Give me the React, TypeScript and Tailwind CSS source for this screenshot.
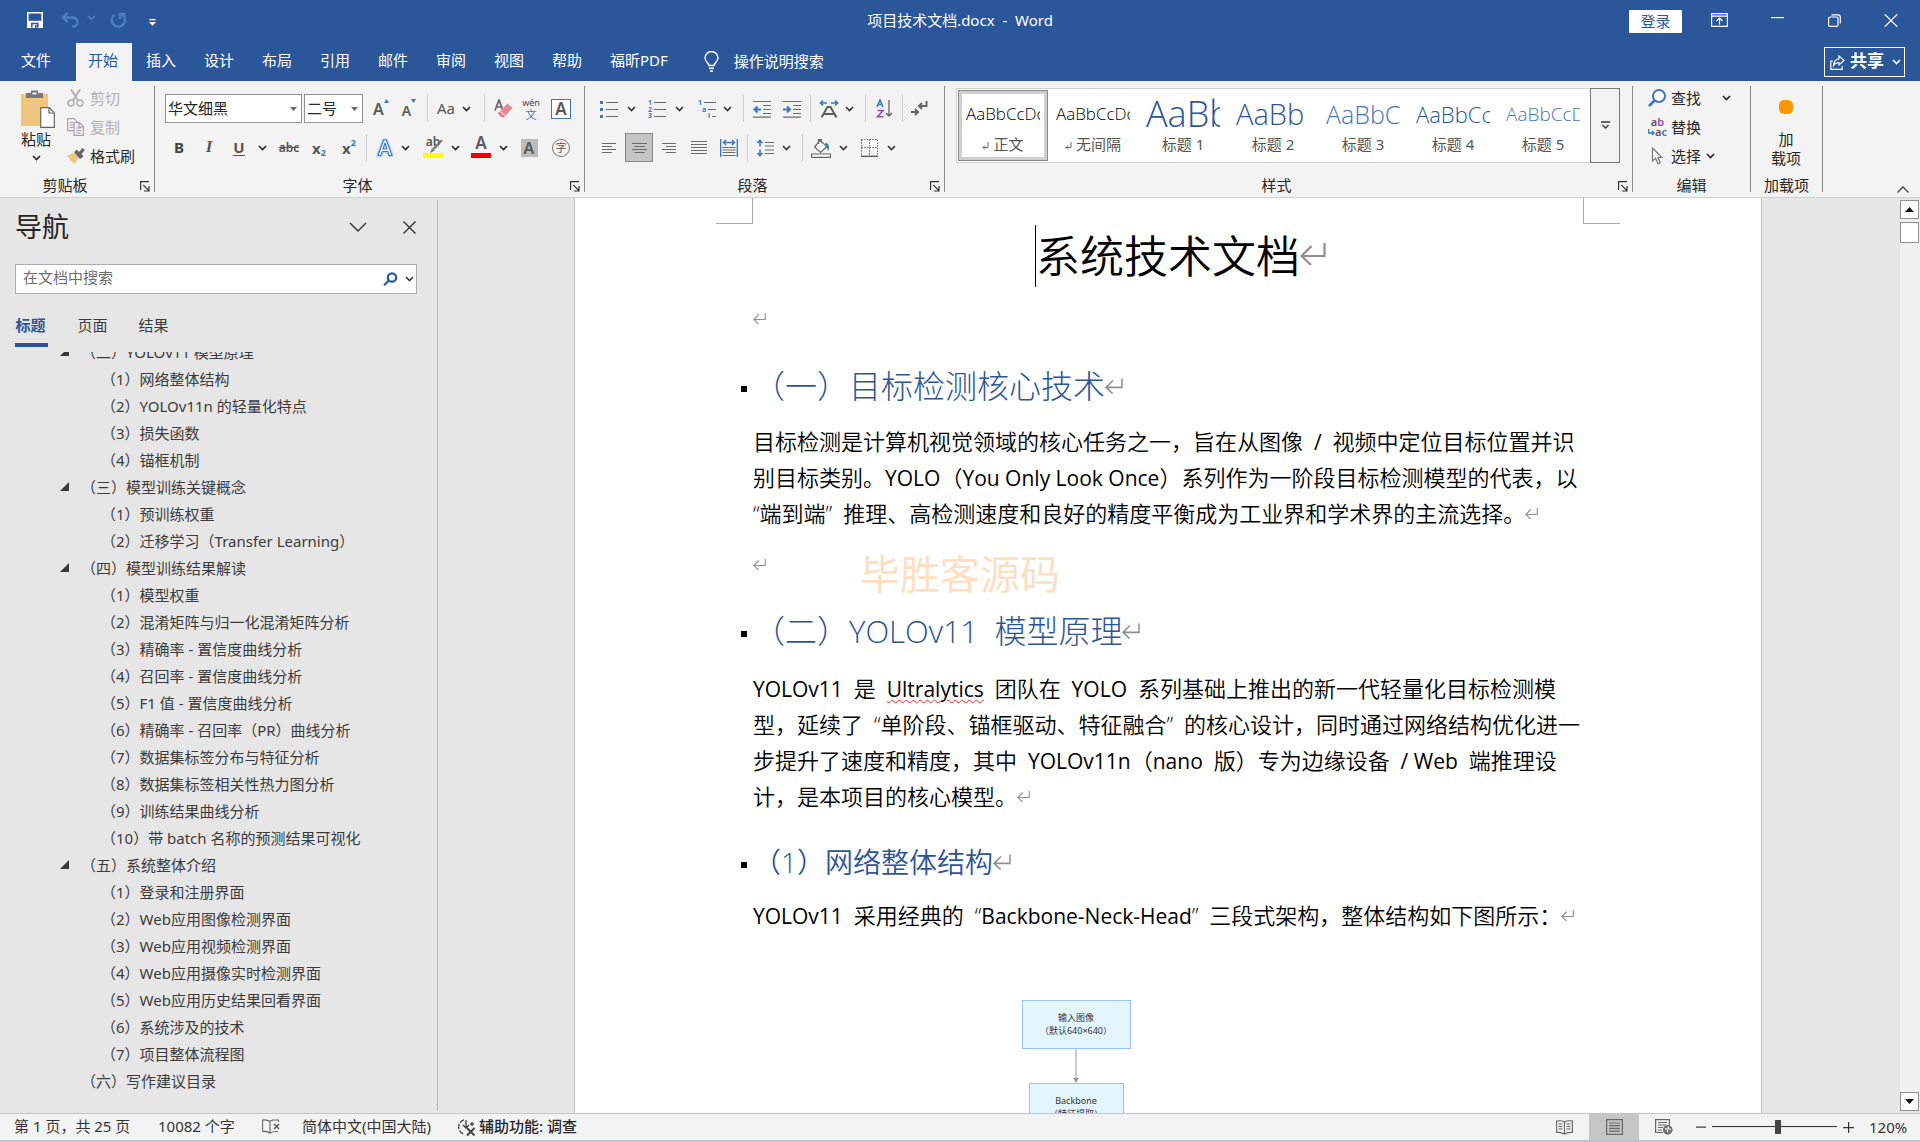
import React from "react";

type Kids = { children?: React.ReactNode };

/* ---------- small shared pieces ---------- */

function Chevron({ className = "" }: { className?: string }) {
  return (
    <svg width="9" height="6" viewBox="0 0 9 6" className={className} fill="none" stroke="currentColor" strokeWidth="1.6" aria-hidden="true">
      <path d="M1 1l3.5 3.5L8 1" />
    </svg>
  );
}

function Tool({ label, className = "w-7", children }: Kids & { label: string; className?: string }) {
  return (
    <button type="button" aria-label={label} className={`flex h-[29px] shrink-0 items-center justify-center ${className}`}>
      {children}
    </button>
  );
}

function Drop({ label, className = "w-4" }: { label: string; className?: string }) {
  return (
    <Tool label={label} className={className}>
      <Chevron />
    </Tool>
  );
}

function Sep({ className = "" }: { className?: string }) {
  return <div className={`h-[27px] w-px shrink-0 bg-[#d0d0d0] ${className}`} />;
}

function Launcher({ label }: { label: string }) {
  return (
    <button type="button" aria-label={label} className="absolute right-1 bottom-0">
      <svg width="10" height="11" viewBox="0 0 10 11" fill="none" stroke="#333" strokeWidth="1.2">
        <path d="M.6 9V.6H9M3.2 3.8l5.4 5.6M9 5v5H4" />
      </svg>
    </button>
  );
}

function Group({ label, launcher, className, children }: Kids & { label: string; launcher?: boolean; className: string }) {
  return (
    <section className={`relative mt-[5px] flex h-[106px] shrink-0 flex-col border-r border-[#8a8a8a] ${className}`}>
      <div className="h-[92px] shrink-0">{children}</div>
      <div className={`flex h-3.5 items-center justify-center leading-none whitespace-nowrap ${launcher ? "pr-6" : ""}`}>{label}</div>
      {launcher && <Launcher label={`${label}设置`} />}
    </section>
  );
}

function ReturnMark({ className = "" }: { className?: string }) {
  return (
    <svg viewBox="0 0 26 22" className={`inline-block shrink-0 ${className}`} fill="none" stroke="#8f8f8f" strokeWidth="2.2" aria-hidden="true">
      <path d="M24.5 0v13H2M11.5 3L1.5 13l9.5 9" />
    </svg>
  );
}

/* ---------- title bar ---------- */

function TitleBar() {
  return (
    <header className="grid h-[43px] grid-cols-[1fr_auto_1fr] items-start text-white">
      <div className="flex h-10 items-center pl-[27px]">
        <button type="button" aria-label="保存">
          <svg width="16" height="16" viewBox="0 0 16 16" fill="none" stroke="#fff" strokeWidth="1.6">
            <path d="M.8.8h14.4v14.4H.8z" />
            <path d="M1 8.8h14v6.4H1z" fill="#fff" stroke="none" />
            <path d="M4.8 15.5v-4h6v4" stroke="#2b579a" />
            <path d="M8 13h1.6v3H8z" fill="#2b579a" stroke="none" />
          </svg>
        </button>
        <button type="button" aria-label="撤消" className="ml-[18px] flex items-center gap-2 text-[#4f7dbd]">
          <svg width="18" height="16" viewBox="0 0 18 16" fill="none" stroke="currentColor" strokeWidth="2.4">
            <path d="M6.5 1L2 5.5l4.500 4.500M2.500 5.500h8.500c3.500 0 5.500 2 5.500 4.700 0 2.500-2 4.300-4.500 4.300h-1" />
          </svg>
          <Chevron className="-mt-1" />
        </button>
        <button type="button" aria-label="恢复" className="ml-[14px] text-[#4f7dbd]">
          <svg width="17" height="17" viewBox="0 0 17 17" fill="none" stroke="currentColor" strokeWidth="2.4">
            <path d="M4.500 2.800A6.600 6.600 0 1 0 12 2.600M10 7V2h5.500" />
          </svg>
        </button>
        <button type="button" aria-label="自定义快速访问工具栏" className="ml-[22px] mt-1">
          <svg width="7" height="7" viewBox="0 0 7 7" fill="#fff">
            <path d="M.5 0h6v1.300h-6zM0 3h7L3.500 6.800z" />
          </svg>
        </button>
      </div>
      <h1 className="flex h-10 items-center whitespace-pre">项目技术文档.docx  -  Word</h1>
      <div className="flex h-10 items-center justify-end pr-[22px]">
        <button type="button" className="mt-[3px] flex h-[23px] w-[53px] items-center justify-center rounded-[1px] bg-white pb-0.5 text-[#2b579a]">登录</button>
        <button type="button" aria-label="功能区显示选项" className="ml-[29px]">
          <svg width="17" height="14" viewBox="0 0 17 14" fill="none" stroke="#fff" strokeWidth="1.200">
            <path d="M.6.6h15.800v12.800H.6zM.6 3.200h15.800M8.500 11.500V5.500M5.500 8l3-3 3 3" />
          </svg>
        </button>
        <button type="button" aria-label="最小化" className="ml-[43px] -mt-1">
          <svg width="13" height="2" viewBox="0 0 13 2"><path d="M0 0h13v1.200H0z" fill="#fff" /></svg>
        </button>
        <button type="button" aria-label="向下还原" className="ml-[44px]">
          <svg width="13" height="13" viewBox="0 0 13 13" fill="none" stroke="#fff" strokeWidth="1.200">
            <rect x=".6" y="3" width="9.400" height="9.400" rx="1.500" />
            <path d="M3.500.8h6.300c1.500 0 2.500 1 2.500 2.500v6.300" />
          </svg>
        </button>
        <button type="button" aria-label="关闭" className="ml-[43px]">
          <svg width="14" height="13" viewBox="0 0 14 13" fill="none" stroke="#fff" strokeWidth="1.200">
            <path d="M.7.3l12.600 12.400M13.300.3L.7 12.700" />
          </svg>
        </button>
      </div>
    </header>
  );
}

const TABS = ["插入", "设计", "布局", "引用", "邮件", "审阅", "视图", "帮助"];

function RibbonTabs() {
  return (
    <nav className="flex h-[38px] items-center text-white">
      <button type="button" className="h-full w-[76px] pr-1 pb-1">文件</button>
      <button type="button" className="h-full w-14 bg-[#f3f3f3] pr-0.5 pb-1 text-[#2b579a]">开始</button>
      {TABS.map((t) => (
        <button key={t} type="button" className="h-full w-[58px] shrink-0 pb-1">{t}</button>
      ))}
      <button type="button" className="h-full shrink-0 pr-4 pb-1 pl-3.5">福昕PDF</button>
      <button type="button" className="ml-5 flex h-full shrink-0 items-center gap-[15px] pb-0.5">
        <svg width="15" height="21" viewBox="0 0 15 21" fill="none" stroke="#fff" strokeWidth="1.400">
          <path d="M5 14.500c0-2-4-4-4-7.500a6.400 6.400 0 0 1 13 0c0 3.500-4 5.500-4 7.500zM5 17.300h5M6 20h3" />
        </svg>
        操作说明搜索
      </button>
      <button type="button" className="mr-[15px] ml-auto flex h-[30px] w-[81px] items-center border border-white pl-[5px]">
        <svg width="15" height="15" viewBox="0 0 15 15" fill="none" stroke="#fff" strokeWidth="1.200">
          <path d="M3 6H.8v8.300h11.400V11M9 1l5 4.500L9 10V7.500c-2.500 0-4 .8-5.500 3C3.800 6.500 6 4.200 9 3.800z" />
        </svg>
        <span className="mb-0.5 ml-[5px] text-[17px] font-bold">共享</span>
        <Chevron className="ml-2" />
      </button>
    </nav>
  );
}

/* ---------- ribbon ---------- */

function ClipboardGroup() {
  return (
    <Group label="剪贴板" launcher className="w-[155px]">
      <div className="flex pl-[17px]">
        <button type="button" className="flex w-[38px] flex-col items-center pt-[3px]">
          <svg width="36" height="40" viewBox="0 0 36 40" fill="none" className="ml-1">
            <path d="M1 5h27v32H1z" fill="#eec77d" />
            <path d="M6 9V4h5V1.500h7V4h5v5z" fill="#777" />
            <path d="M12.500 3.500h4v2h-4z" fill="#f3f3f3" />
            <path d="M20.700 18.700h8.600l5 5v14.600H20.700z" fill="#fff" stroke="#666" strokeWidth="1.200" />
            <path d="M29 19v5h5" stroke="#666" strokeWidth="1.200" />
          </svg>
          <span className="mt-0.5 leading-4">粘贴</span>
          <Chevron className="mt-2" />
        </button>
        <div className="ml-3 flex flex-col whitespace-nowrap">
          <button type="button" className="flex h-6 items-center gap-[6px] text-[#b1b1b1]">
            <svg width="17" height="18" viewBox="0 0 17 18" fill="none" stroke="currentColor" strokeWidth="1.500">
              <path d="M4 .5l7.500 11.500M13 .5L5.500 12" strokeWidth="2" />
              <circle cx="4" cy="14" r="3" /><circle cx="13" cy="14" r="3" />
            </svg>
            剪切
          </button>
          <button type="button" className="mt-[5px] flex h-6 items-center gap-[6px] text-[#b1b1b1]">
            <svg width="17" height="18" viewBox="0 0 17 18" fill="#f3f3f3" stroke="#aaa2ae" strokeWidth="1.200">
              <path d="M.6.6h6.400l3 3v9H.6zM2.500 4.500h4M2.500 7h4M2.500 9.500h4" />
              <path d="M7 4.600h5.500l3.900 3.900v8.900H7zM9 10h5M9 12.500h5M9 15h5M12 5v4h4" />
            </svg>
            复制
          </button>
          <button type="button" className="mt-[5px] flex h-6 items-center gap-[5px]">
            <svg width="18" height="16" viewBox="0 0 18 16">
              <path d="M0 7.500l8-3 4 5-5 6.500z" fill="#eec77d" />
              <path d="M7 4l3-2.500L12 4l3.500-4L18 2l-3.500 4 2 2.500L13 11z" fill="#666" />
            </svg>
            格式刷
          </button>
        </div>
      </div>
    </Group>
  );
}

function Combo({ label, value, className }: { label: string; value: string; className: string }) {
  return (
    <div className={`relative h-[29px] shrink-0 border border-[#919191] bg-white ${className}`}>
      <select aria-label={label} defaultValue={value} className="h-full w-full appearance-none pb-0.5 pl-0.5 outline-none">
        <option>{value}</option>
      </select>
      <svg width="7" height="4" viewBox="0 0 7 4" className="pointer-events-none absolute top-3 right-1" fill="#666"><path d="M0 0h7L3.500 4z" /></svg>
    </div>
  );
}

const letterA = "font-['Noto_Sans'] font-semibold leading-none text-[#5a5a5a]";

function FontGroup() {
  return (
    <Group label="字体" launcher className="w-[430px]">
      <div className="flex items-center pt-2 pl-2.5">
        <Combo label="字体" value="华文细黑" className="w-[137px]" />
        <Combo label="字号" value="二号" className="ml-0.5 w-[59px]" />
        <Tool label="增大字号" className="ml-1 w-7">
          <span className={`text-[16px] ${letterA}`}>A</span>
          <svg width="5" height="4" viewBox="0 0 5 4" className="mb-4" fill="#3f78ba"><path d="M0 4h5L2.500 0z" /></svg>
        </Tool>
        <Tool label="减小字号">
          <span className={`mt-1 text-[14px] ${letterA}`}>A</span>
          <svg width="5" height="4" viewBox="0 0 5 4" className="mb-4" fill="#3f78ba"><path d="M0 0h5L2.500 4z" /></svg>
        </Tool>
        <Sep className="ml-1" />
        <Tool label="更改大小写" className="ml-1 w-7"><span className="mb-0.5 text-[15px] text-[#555]">Aa</span></Tool>
        <Drop label="更改大小写选项" className="w-3" />
        <Sep className="ml-3" />
        <Tool label="清除所有格式" className="ml-1 w-7">
          <svg width="19" height="19" viewBox="0 0 19 19" fill="none">
            <path d="M1 11.500L5 1l4 10.500M2.500 8h5" stroke="#666" strokeWidth="1.700" />
            <path d="M13.500 4.500L18.500 9 10 18.500 7 18l-3.500-3.500z" fill="#e8879c" />
            <path d="M6 12l5 4.500" stroke="#f3f3f3" />
          </svg>
        </Tool>
        <Tool label="拼音指南">
          <span className="flex flex-col items-center">
            <span className="text-[9px] leading-[12px] text-[#444]">wén</span>
            <span className="text-[11px] leading-[12px] text-[#3f78ba]">文</span>
          </span>
        </Tool>
        <Tool label="字符边框" className="ml-0.5 w-7">
          <span className={`flex size-5 items-center justify-center border border-[#3f78ba] bg-white text-[17px] ${letterA}`}>A</span>
        </Tool>
      </div>
      <div className="flex items-center pt-2.5 pl-[9px]">
        <Tool label="加粗" className="w-[30px]"><span className="mb-0.5 text-[15px] font-bold text-[#444]">B</span></Tool>
        <Tool label="倾斜" className="w-[30px]"><span className="mb-0.5 font-['Liberation_Serif'] text-[17px] font-bold italic text-[#555]">I</span></Tool>
        <Tool label="下划线" className="w-[30px]"><span className="border-b border-[#555] text-[15px] leading-[16px] font-bold text-[#555]">U</span></Tool>
        <Drop label="下划线样式" />
        <Tool label="删除线" className="ml-1 w-[30px]"><span className="text-[12px] font-semibold text-[#555] line-through">abc</span></Tool>
        <Tool label="下标" className="w-[30px]">
          <span className="text-[15px] font-bold text-[#555]">x</span><span className="mt-2.5 text-[9px] font-bold text-[#3f78ba]">2</span>
        </Tool>
        <Tool label="上标" className="w-[30px]">
          <span className="text-[15px] font-bold text-[#555]">x</span><span className="mb-2.5 text-[9px] font-bold text-[#3f78ba]">2</span>
        </Tool>
        <Sep className="ml-0.5" />
        <Tool label="文本效果" className="ml-1 w-7">
          <svg width="18" height="20" viewBox="0 0 18 20" fill="none" strokeLinejoin="round">
            <path d="M2 17.500L7.700 2h2.600L16 17.500h-2.800L11.800 13.500H6.200L4.800 17.500zM7 11h4L9 5z" stroke="#b8d3f0" strokeWidth="3.500" />
            <path d="M2 17.500L7.700 2h2.600L16 17.500h-2.800L11.800 13.500H6.200L4.800 17.500zM7 11h4L9 5z" fill="#fff" stroke="#3f78ba" strokeWidth="1.100" />
          </svg>
        </Tool>
        <Drop label="文本效果选项" className="w-3" />
        <Tool label="突出显示颜色" className="ml-2 w-7">
          <span className="relative flex h-5 w-5 flex-col">
            <span className="-mt-1 text-[12px] leading-[16px] font-semibold text-[#555]">ab</span>
            <svg width="20" height="14" viewBox="0 0 20 14" className="absolute top-0.5 left-0" fill="none"><path d="M19 0l-8.500 9" stroke="#777" strokeWidth="2.400" /><path d="M9 8l3 2.500-5 2.500z" fill="#777" /></svg>
            <span className="absolute inset-x-0 bottom-0 h-[5px] bg-[#ffff00]" />
          </span>
        </Tool>
        <Drop label="突出显示选项" />
        <Tool label="字体颜色" className="ml-1 w-7">
          <span className="flex h-5 w-5 flex-col items-center justify-between">
            <span className={`-mt-1 text-[17px] ${letterA}`}>A</span>
            <span className="h-[5px] w-full shrink-0 bg-[#f00000]" />
          </span>
        </Tool>
        <Drop label="字体颜色选项" />
        <Tool label="字符底纹" className="ml-1 w-7">
          <span className={`flex h-[18px] w-[17px] items-center justify-center bg-[#bcbcbc] text-[16px] ${letterA}`}>A</span>
        </Tool>
        <Tool label="带圈字符" className="ml-1 w-7">
          <span className="flex size-[18px] items-center justify-center rounded-full border border-[#777] text-[11px] leading-none text-[#555]">字</span>
        </Tool>
      </div>
    </Group>
  );
}

function Lines({ d, width = 18, extra }: { d: string; width?: number; extra?: React.ReactNode }) {
  return (
    <svg width={width} height="18" viewBox={`0 0 ${width} 18`} fill="none" stroke="#6a6a6a" strokeWidth="1.200">
      <path d={d} />
      {extra}
    </svg>
  );
}

const blueNum = "fill-[#3f78ba] stroke-none font-['Noto_Sans'] font-bold text-[7px]";

function ParagraphGroup() {
  return (
    <Group label="段落" launcher className="w-[360px]">
      <div className="flex items-center pt-2 pl-2.5 text-[#333]">
        <Tool label="项目符号">
          <Lines d="M6 2.500h12M6 9.500h12M6 16.500h12" extra={<path d="M0 1h3v3H0zM0 8h3v3H0zM0 15h3v3H0z" fill="#3f78ba" stroke="none" />} />
        </Tool>
        <Drop label="项目符号选项" />
        <Tool label="编号" className="ml-1 w-7">
          <Lines d="M6 2.500h12M6 9.500h12M6 16.500h12" extra={<><text x="0" y="5" className={blueNum}>1</text><text x="0" y="12" className={blueNum}>2</text><text x="0" y="18" className={blueNum}>3</text></>} />
        </Tool>
        <Drop label="编号选项" />
        <Tool label="多级列表" className="ml-1.5 w-7">
          <Lines d="M6 2.500h12M10 9.500h8M14 16.500h4" extra={<><text x="0" y="5" className={blueNum}>1</text><text x="4" y="12" className={blueNum}>a</text><text x="10" y="18" className={blueNum}>i</text></>} />
        </Tool>
        <Drop label="多级列表选项" className="w-3" />
        <Sep className="ml-2.5" />
        <Tool label="减少缩进量" className="ml-1 w-7">
          <Lines d="M0 1.500h18M10 5.500h8M10 9.500h8M10 13.500h8M0 17.200h18" extra={<path d="M8 9.500H2M4.500 6.500l-3 3 3 3" stroke="#3f78ba" strokeWidth="2" />} />
        </Tool>
        <Tool label="增加缩进量" className="ml-0.5 w-7">
          <Lines d="M0 1.500h18M10 5.500h8M10 9.500h8M10 13.500h8M0 17.200h18" extra={<path d="M0 9.500h6M4 6.500l3 3-3 3" stroke="#3f78ba" strokeWidth="2" />} />
        </Tool>
        <Sep className="ml-1" />
        <Tool label="中文版式" className="ml-1 w-7">
          <svg width="20" height="18" viewBox="0 0 20 18" fill="none">
            <path d="M2.500 17.500L8.500 7h3l6 10.500M5 14h10" stroke="#5a5a5a" strokeWidth="1.900" />
            <path d="M8 3H1.500M4 .5L1.500 3 4 5.500M12 3h6.500M16 .5L18.500 3 16 5.500" stroke="#3f78ba" strokeWidth="1.700" />
          </svg>
        </Tool>
        <Drop label="中文版式选项" className="w-3" />
        <Sep className="ml-2.5" />
        <Tool label="排序" className="ml-1 w-7">
          <svg width="17" height="19" viewBox="0 0 17 19" fill="none" strokeWidth="1.600">
            <path d="M1 8L4 1l3 7M2 5.500h4" stroke="#3f78ba" />
            <path d="M1.500 11.500h5.500L1.500 17.800h6" stroke="#8f4fa8" />
            <path d="M13 1v16M10 14l3 3 3-3" stroke="#666" strokeWidth="1.300" />
          </svg>
        </Tool>
        <Sep className="ml-1" />
        <Tool label="显示编辑标记" className="ml-0.5 w-7">
          <svg width="17" height="15" viewBox="0 0 17 15" fill="none" stroke="#666" strokeWidth="2">
            <path d="M15.500 0v5H9M11 2L8 5l3 3M0 11h6M4 8l3 3-3 3" />
          </svg>
        </Tool>
      </div>
      <div className="flex items-center pt-2.5 pl-2.5 text-[#333]">
        <Tool label="左对齐"><Lines width={14} d="M0 4.500h14M0 7.500h10M0 10.500h14M0 13.500h10" /></Tool>
        <Tool label="居中" className="ml-0.5 w-7 border border-[#888] bg-[#c5c5c5]"><Lines width={15} d="M0 4.500h15M2.500 7.500h10M0 10.500h15M2.500 13.500h10" /></Tool>
        <Tool label="右对齐" className="ml-0.5 w-7"><Lines width={14} d="M0 4.500h14M4 7.500h10M0 10.500h14M4 13.500h10" /></Tool>
        <Tool label="两端对齐" className="ml-0.5 w-7"><Lines width={16} d="M0 2.500h16M0 5.500h16M0 8.500h16M0 11.500h16M0 14.500h16" /></Tool>
        <Tool label="分散对齐" className="ml-0.5 w-7">
          <Lines d="M2.500 8.500h13M2.500 11h13M2.500 13.500h13M2.500 16.500h13" extra={<path d="M.6 0v18M17.400 0v18M4 3.500h10M6 1L3.500 3.500 6 6M12 1l2.500 2.500L12 6" stroke="#3f78ba" strokeWidth="1.500" />} />
        </Tool>
        <Sep className="ml-1" />
        <Tool label="行和段落间距" className="ml-1 w-7">
          <Lines d="M8 3.500h9M8 7h9M8 11h9M8 14.500h9" extra={<path d="M3 1.500v6M.5 4L3 1.500 5.500 4M3 10.500v6M.5 14L3 16.500 5.500 14" stroke="#3f78ba" strokeWidth="1.600" />} />
        </Tool>
        <Drop label="间距选项" className="w-3" />
        <Sep className="ml-2.5" />
        <Tool label="底纹" className="ml-1 w-7">
          <svg width="20" height="20" viewBox="0 0 20 20" fill="none" stroke="#666" strokeWidth="1.200">
            <path d="M9 2.500L3.500 9l6 5.500L16 8.500zM7.500 6V1.500h3V5" fill="#fff" />
            <path d="M14.500 4.500c3 1 4.300 3.500 3 8.500-1-2-1.500-3-3-4z" fill="#3f78ba" stroke="none" />
            <path d="M.6 16h18.800v3.400H.6z" fill="#fff" />
          </svg>
        </Tool>
        <Drop label="底纹选项" />
        <Tool label="边框" className="ml-1 w-7">
          <svg width="17" height="18" viewBox="0 0 17 18" fill="#fff" stroke="#666" strokeDasharray="1.500 1.200">
            <path d="M.5.5h16v16.500M.5.500V17M8.500.5V17M.5 8.500h16" />
            <path d="M0 17.300h17" strokeDasharray="none" stroke="#555" strokeWidth="1.300" />
          </svg>
        </Tool>
        <Drop label="边框选项" />
      </div>
    </Group>
  );
}

const STYLES = [
  { name: "无间隔", text: "AaBbCcDc", sample: "text-[17px] text-black", mark: true },
  { name: "标题 1", text: "AaBb", sample: "text-[36px] text-[#2f5496]" },
  { name: "标题 2", text: "AaBb", sample: "text-[29px] text-[#2f5496]" },
  { name: "标题 3", text: "AaBbC", sample: "text-[25px] text-[#4a74b5]" },
  { name: "标题 4", text: "AaBbCc", sample: "text-[22px] text-[#2f5496]" },
  { name: "标题 5", text: "AaBbCcD", sample: "text-[19px] text-[#4a74b5]" },
];

function StyleMark() {
  return (
    <svg width="7" height="8" viewBox="0 0 7 8" className="mt-1" fill="none" stroke="#666" strokeWidth="1">
      <path d="M6 0v5.500H1M3 3.500l-2 2 2 2" />
    </svg>
  );
}

function StyleCell({ name, text, sample, mark }: { name: string; text: string; sample: string; mark?: boolean }) {
  return (
    <>
      <span className={`flex h-10 w-[74px] items-center overflow-hidden font-['Open_Sans','Noto_Sans_CJK_SC'] leading-10 font-[350] whitespace-nowrap ${sample}`}>{text}</span>
      <span className="flex h-5 items-center justify-center gap-1 text-[15px] leading-none text-[#555]">
        {mark && <StyleMark />}
        {name}
      </span>
    </>
  );
}

function StylesGroup() {
  return (
    <Group label="样式" launcher className="w-[688px]">
      <div className="flex pt-0.5 pl-[11px]">
        <div className="flex h-[75px] w-[664px] border border-[#d0d0d0] bg-white">
          <button type="button" className="m-px flex h-[71px] w-[90px] shrink-0 flex-col items-center border border-[#8a8a8a] bg-[#cfcfcb] p-[3px]">
            <span className="flex h-full w-full flex-col items-center bg-white">
              <StyleCell name="正文" text="AaBbCcDc" sample="text-[17px] text-black" mark />
            </span>
          </button>
          {STYLES.map((s) => (
            <button key={s.name} type="button" className="flex w-[90px] shrink-0 flex-col items-center pt-[5px] pr-0.5">
              <StyleCell {...s} />
            </button>
          ))}
          <button type="button" aria-label="其他样式" className="-m-px ml-auto flex w-[30px] items-center justify-center border border-[#777] bg-[#f3f3f3]">
            <svg width="9" height="9" viewBox="0 0 9 9" fill="none" stroke="#333" strokeWidth="1.300"><path d="M0 1h9M1.500 4l3 3 3-3" /></svg>
          </button>
        </div>
      </div>
    </Group>
  );
}

function EditGroup() {
  return (
    <Group label="编辑" className="w-[118px]">
      <div className="flex flex-col pl-[15px]">
        <button type="button" className="flex h-6 items-center gap-[5px]">
          <svg width="18" height="18" viewBox="0 0 18 18" fill="none" stroke="#3f78ba" strokeWidth="2"><circle cx="11" cy="7" r="6" fill="#fff" /><path d="M6.500 11.500L1 17" strokeWidth="2.600" /></svg>
          查找
          <Chevron className="ml-4" />
        </button>
        <button type="button" className="mt-[5px] flex h-6 items-center gap-[4px]">
          <span className="flex w-[19px] flex-col text-[11px] leading-[10px] font-semibold text-[#555]">
            <span>a<span className="text-[#8f4fa8]">b</span></span>
            <span className="flex items-center justify-end">
              <svg width="7" height="7" viewBox="0 0 7 7" fill="none" stroke="#3f78ba" strokeWidth="1.300"><path d="M.7 0v4H6M4 2l2 2-2 2" /></svg>
              a<span className="text-[#3f78ba]">c</span>
            </span>
          </span>
          替换
        </button>
        <button type="button" className="mt-[5px] flex h-6 items-center gap-[5px]">
          <svg width="18" height="18" viewBox="0 0 18 18" fill="#fff" stroke="#777" strokeWidth="1.200"><path d="M4.500 1v13l3-2.700 2.500 5.500 2.300-1-2.500-5.300h4z" /></svg>
          选择
          <Chevron />
        </button>
      </div>
    </Group>
  );
}

function Ribbon() {
  return (
    <div className="flex h-[117px] border-b border-[#d0d0d0] bg-[#f3f3f3] text-[#262626]">
      <ClipboardGroup />
      <FontGroup />
      <ParagraphGroup />
      <StylesGroup />
      <EditGroup />
      <Group label="加载项" className="w-[72px]">
        <button type="button" className="flex w-full flex-col items-center pt-3.5 pr-px">
          <span className="size-3.5 rounded-[5px] bg-[#ff9500]" />
          <span className="mt-4 leading-[19px]">加<br />载项</span>
        </button>
      </Group>
      <button type="button" aria-label="折叠功能区" className="mr-[11px] mb-1 ml-auto self-end">
        <svg width="12" height="7" viewBox="0 0 12 7" fill="none" stroke="#444" strokeWidth="1.300"><path d="M.5 6.500l5.500-5.500 5.500 5.500" /></svg>
      </button>
    </div>
  );
}

/* ---------- navigation pane ---------- */

const TREE: { t: string; parent?: boolean; top?: boolean }[] = [
  { t: "（二）YOLOv11 模型原理", top: true, parent: true },
  { t: "（1）网络整体结构" },
  { t: "（2）YOLOv11n 的轻量化特点" },
  { t: "（3）损失函数" },
  { t: "（4）锚框机制" },
  { t: "（三）模型训练关键概念", top: true, parent: true },
  { t: "（1）预训练权重" },
  { t: "（2）迁移学习（Transfer Learning）" },
  { t: "（四）模型训练结果解读", top: true, parent: true },
  { t: "（1）模型权重" },
  { t: "（2）混淆矩阵与归一化混淆矩阵分析" },
  { t: "（3）精确率 - 置信度曲线分析" },
  { t: "（4）召回率 - 置信度曲线分析" },
  { t: "（5）F1 值 - 置信度曲线分析" },
  { t: "（6）精确率 - 召回率（PR）曲线分析" },
  { t: "（7）数据集标签分布与特征分析" },
  { t: "（8）数据集标签相关性热力图分析" },
  { t: "（9）训练结果曲线分析" },
  { t: "（10）带 batch 名称的预测结果可视化" },
  { t: "（五）系统整体介绍", top: true, parent: true },
  { t: "（1）登录和注册界面" },
  { t: "（2）Web应用图像检测界面" },
  { t: "（3）Web应用视频检测界面" },
  { t: "（4）Web应用摄像实时检测界面" },
  { t: "（5）Web应用历史结果回看界面" },
  { t: "（6）系统涉及的技术" },
  { t: "（7）项目整体流程图" },
  { t: "（六）写作建议目录", top: true },
];

function NavPane() {
  return (
    <aside className="mt-0.5 mb-0.5 flex w-[438px] shrink-0 flex-col border-r border-[#b9b9b9] text-[#3b3b3b]">
      <div className="flex h-[54px] items-center pl-[15px]">
        <h2 className="text-[27px] text-[#262626]">导航</h2>
        <button type="button" aria-label="任务窗格选项" className="ml-auto">
          <svg width="18" height="10" viewBox="0 0 18 10" fill="none" stroke="#333" strokeWidth="1.400"><path d="M1 1l8 8 8-8" /></svg>
        </button>
        <button type="button" aria-label="关闭窗格" className="mr-[21px] ml-[36px]">
          <svg width="13" height="13" viewBox="0 0 13 13" fill="none" stroke="#333" strokeWidth="1.400"><path d="M.5.5l12 12M12.500.5l-12 12" /></svg>
        </button>
      </div>
      <div className="mt-2.5 mr-[20px] ml-[15px] flex h-[30px] items-center border border-[#ababab] bg-white pr-0.5">
        <input type="text" aria-label="在文档中搜索" placeholder="在文档中搜索" className="h-full min-w-0 flex-1 bg-transparent pb-1 pl-[7px] outline-none placeholder:text-[#6e6e6e]" />
        <button type="button" aria-label="搜索" className="mr-[7px]">
          <svg width="15" height="14" viewBox="0 0 15 14" fill="none" stroke="#2b579a" strokeWidth="2.200"><circle cx="9" cy="5.500" r="4.200" /><path d="M6 8.500L1 13.300" /></svg>
        </button>
        <button type="button" aria-label="搜索选项"><Chevron /></button>
      </div>
      <div className="mt-4 ml-[15px] flex h-[37px] items-start gap-7">
        <button type="button" className="h-full w-[33px] border-b-4 border-[#2b579a] pr-0.5 pb-1 font-bold whitespace-nowrap text-[#2b579a]">标题</button>
        <button type="button" className="h-[33px] w-[33px] pb-1">页面</button>
        <button type="button" className="h-[33px] w-[33px] pb-1">结果</button>
      </div>
      <div className="mt-[5px] flex-1 overflow-hidden">
        <ul className="-mt-3.5">
          {TREE.map((n) => (
            <li key={n.t} className="flex h-[27px] items-center whitespace-pre">
              <span className={n.top ? "flex w-[81px] shrink-0 justify-end pr-3" : "w-[101px] shrink-0"}>
                {n.parent && (
                  <svg width="9" height="9" viewBox="0 0 9 9" fill="#3b3b3b"><path d="M9 0v9H0z" /></svg>
                )}
              </span>
              <a href="#doc">{n.t}</a>
            </li>
          ))}
        </ul>
      </div>
    </aside>
  );
}

/* ---------- document ---------- */

const LATIN = /([A-Za-z0-9/ -]*[A-Za-z0-9/ ][A-Za-z0-9/ -]*)/;

/* Latin runs are set one pixel smaller than the surrounding Chinese text. */
function Mixed({ text, latin }: { text: string; latin: string }) {
  return (
    <>
      {text.split(LATIN).map((part, i) => (i % 2 ? <span key={i} className={latin}>{part}</span> : part))}
    </>
  );
}

type Line = { text: string; spell?: string; after?: string; end?: boolean };

function Para({ lines, className = "" }: { lines: Line[]; className?: string }) {
  return (
    <p className={`text-[22px] leading-9 font-[350] text-black ${className}`}>
      {lines.map((l, i) => (
        <span key={i} className="block h-9 whitespace-pre">
          <Mixed text={l.text} latin="text-[21px] font-normal" />
          {l.spell && <span className="text-[21px] font-normal underline decoration-[#f22] decoration-wavy decoration-1 underline-offset-2">{l.spell}</span>}
          {l.after && <Mixed text={l.after} latin="text-[21px] font-normal" />}
          {l.end && <ReturnMark className="mb-[5px] h-[11px] w-[13px]" />}
        </span>
      ))}
    </p>
  );
}

function Heading({ text, latin, className = "" }: { text: string; latin: string; className?: string }) {
  return (
    <h3 className={`flex items-center whitespace-pre text-[#2f5496] ${className}`}>
      <span className="mt-1.5 mr-1.5 -ml-3 size-1.5 shrink-0 bg-black" />
      <span><Mixed text={text} latin={latin} /></span>
      <ReturnMark className="h-4 w-[18px]" />
    </h3>
  );
}

function Box({ lines, className }: { lines: string[]; className: string }) {
  return (
    <div className={`flex h-[49px] flex-col items-center justify-center border border-[#9cc0f8] bg-[#e3f5fe] pb-0.5 text-[9px] leading-[13px] font-normal text-[#333] ${className}`}>
      {lines.map((l) => <span key={l}>{l}</span>)}
    </div>
  );
}

function Page() {
  return (
    <main id="doc" className="relative flex flex-1 justify-center overflow-hidden pr-0.5">
      <article className="relative w-[1188px] border-x border-[#c6c6c6] bg-white font-['Open_Sans','Noto_Sans_CJK_SC',sans-serif] font-light">
        <div className="flex h-[26px] justify-between px-[141px]">
          <span className="w-[37px] border-r border-b border-[#ababab]" />
          <span className="w-[37px] border-b border-l border-[#ababab]" />
        </div>
        <div className="px-[178px]">
          <h2 className="mt-px flex h-[62px] items-center justify-center pl-[25px] text-[44px] leading-none font-[350] text-black">
            <span className="h-full w-px bg-black" />
            <span>系统技术文档</span>
            <ReturnMark className="mb-1 h-[22px] w-[26px]" />
          </h2>
          <Para className="mt-[13px]" lines={[{ text: "", end: true }]} />
          <Heading className="mt-[26px] h-12 text-[32px]" latin="text-[31px]" text="（一）目标检测核心技术" />
          <Para
            className="mt-[13px]"
            lines={[
              { text: "目标检测是计算机视觉领域的核心任务之一，旨在从图像  /  视频中定位目标位置并识" },
              { text: "别目标类别。YOLO（You Only Look Once）系列作为一阶段目标检测模型的代表，以" },
              { text: "“端到端”  推理、高检测速度和良好的精度平衡成为工业界和学术界的主流选择。", end: true },
            ]}
          />
          <Para className="mt-[15px]" lines={[{ text: "", end: true }]} />
          <Heading className="mt-[25px] h-12 text-[32px]" latin="text-[31px]" text="（二）YOLOv11  模型原理" />
          <Para
            className="mt-[15px]"
            lines={[
              { text: "YOLOv11  是  ", spell: "Ultralytics", after: "  团队在  YOLO  系列基础上推出的新一代轻量化目标检测模" },
              { text: "型，延续了  “单阶段、锚框驱动、特征融合”  的核心设计，同时通过网络结构优化进一" },
              { text: "步提升了速度和精度，其中  YOLOv11n（nano  版）专为边缘设备  / Web  端推理设" },
              { text: "计，是本项目的核心模型。", end: true },
            ]}
          />
          <Heading className="mt-7 h-10 text-[28px] font-[350]" latin="text-[28px]" text="（1）网络整体结构" />
          <Para
            className="mt-[15px]"
            lines={[{ text: "YOLOv11  采用经典的  “Backbone-Neck-Head”  三段式架构，整体结构如下图所示：", end: true }]}
          />
          <figure className="mt-[67px] mr-[184px] flex flex-col items-center font-['Noto_Sans','Noto_Sans_CJK_SC',sans-serif]">
            <Box className="w-[109px]" lines={["输入图像", "（默认640×640）"]} />
            <svg width="8" height="34" viewBox="0 0 8 34" fill="#999"><path d="M3.500 0h1v29h-1zM1 29h6L4 34z" /></svg>
            <Box className="w-[95px]" lines={["Backbone", "（特征提取）"]} />
          </figure>
        </div>
        <span className="pointer-events-none absolute top-[347px] left-[285px] text-[40px] leading-[58px] font-normal text-[#fde0c2]">毕胜客源码</span>
      </article>
    </main>
  );
}

function Scrollbar() {
  const btn = "flex h-[19px] w-[19px] items-center justify-center border border-[#8f8f8f] bg-white";
  return (
    <div className="mt-0.5 mb-0.5 flex w-5 shrink-0 flex-col bg-[#f0f0f0]">
      <button type="button" aria-label="向上滚动" className={btn}>
        <svg width="9" height="5" viewBox="0 0 9 5" fill="#111"><path d="M0 5h9L4.500 0z" /></svg>
      </button>
      <div className="mt-[3px] h-[21px] w-[19px] border border-[#8f8f8f] bg-white" />
      <button type="button" aria-label="向下滚动" className={`mt-auto ${btn}`}>
        <svg width="9" height="5" viewBox="0 0 9 5" fill="#111"><path d="M0 0h9L4.500 5z" /></svg>
      </button>
    </div>
  );
}

/* ---------- status bar ---------- */

function StatusBar() {
  return (
    <footer className="flex h-[29px] shrink-0 items-stretch border-t border-b-2 border-t-[#c6c6c6] border-b-[#b9c5d6] bg-[#f3f3f3] text-[#333]">
      <div className="flex flex-1 items-center pb-0.5 whitespace-pre">
        <button type="button" className="w-[144px] pl-3.5 text-left">第 1 页，共 25 页</button>
        <button type="button" className="w-[118px] pl-3.5 text-left">10082 个字</button>
        <button type="button" aria-label="校对" className="w-10">
          <svg width="18" height="15" viewBox="0 0 18 15" fill="none" stroke="#666">
            <path d="M8 2.500C6 .8 3 .7.600 1v11.500c2.500-.3 5.400 0 7.400 1.500zM8 2.500c1-.8 2-1.300 3-1.500M8 14c2-1.300 4-1.700 8-1.500M10 1h6.500v2" strokeWidth="1.100" />
            <path d="M12 5l5 5M17 5l-5 5" strokeWidth="1.700" />
          </svg>
        </button>
        <button type="button" className="w-[155px] text-left">简体中文(中国大陆)</button>
        <button type="button" className="flex items-center gap-[3px] font-medium text-[#262626]">
          <svg width="19" height="17" viewBox="0 0 19 17" fill="none" stroke="#444" className="mt-0.5">
            <path d="M7 .8A7.500 7.500 0 0 0 6.500 15" strokeDasharray="5 1.500" strokeWidth="1.300" />
            <path d="M9 1v7M6 6l3 3 3-3M13 5h4M15 3v4" strokeWidth="1.300" />
            <path d="M10 9l7.500 7.500M17.500 9L10 16.500" strokeWidth="2" />
          </svg>
          辅助功能: 调查
        </button>
      </div>
      <button type="button" aria-label="阅读视图" className="flex w-[50px] items-center justify-center">
        <svg width="17" height="15" viewBox="0 0 17 15" fill="none" stroke="#666" strokeWidth="1.100">
          <path d="M8.500 2C6 .7 3 .6.600 1v11.500c2.500-.3 5.500 0 7.900 1.500 2.400-1.500 5.400-1.800 7.900-1.500V1C14 .6 11 .7 8.500 2zM8.500 2v12M2.500 4h4M2.500 6.500h4M2.500 9h4M10.500 4h4M10.500 6.500h4M10.500 9h4" />
        </svg>
      </button>
      <button type="button" aria-label="页面视图" className="flex w-[50px] items-center justify-center bg-[#c6c6c6]">
        <svg width="17" height="16" viewBox="0 0 17 16" fill="none" stroke="#666" strokeWidth="1.200"><path d="M.6.6h15.800v14.800H.6zM3 4h11M3 6.700h11M3 9.400h11M3 12.100h11" /></svg>
      </button>
      <button type="button" aria-label="Web 版式视图" className="flex w-[50px] items-center justify-center">
        <svg width="18" height="16" viewBox="0 0 18 16" fill="none" stroke="#666" strokeWidth="1.200">
          <path d="M8 13.500H.6V.6h13.800V6M3 3.500h9M3 6h8M3 8.500h5M3 11h4" />
          <circle cx="12.800" cy="10.800" r="4.200" fill="#777" />
          <path d="M10 9.500l2.500 1v2.500M13 7.500l.5 2 2.500 1" stroke="#f3f3f3" />
        </svg>
      </button>
      <div className="flex items-center pl-[7px]">
        <button type="button" aria-label="缩小" className="w-4"><svg width="10" height="10" viewBox="0 0 10 10"><path d="M0 4.500h10v1.200H0z" fill="#333" /></svg></button>
        <input
          type="range"
          aria-label="缩放"
          min={0}
          max={100}
          defaultValue={53}
          className="h-3.5 w-[125px] appearance-none bg-linear-to-b from-transparent from-46% via-[#262626] via-46% to-transparent to-54% [&::-webkit-slider-thumb]:h-3.5 [&::-webkit-slider-thumb]:w-1.5 [&::-webkit-slider-thumb]:appearance-none [&::-webkit-slider-thumb]:bg-[#444]"
        />
        <button type="button" aria-label="放大" className="ml-1.5"><svg width="11" height="11" viewBox="0 0 11 11"><path d="M0 5h11v1.200H0zM5 0h1.200v11H5z" fill="#333" /></svg></button>
        <button type="button" className="ml-[15px] w-[51px] text-left">120%</button>
      </div>
    </footer>
  );
}

export default function App() {
  return (
    <div className="flex h-screen min-w-[1840px] flex-col overflow-hidden bg-[#e6e6e6] font-['Noto_Sans','Noto_Sans_CJK_SC',sans-serif] text-[15px] leading-5" lang="zh-CN">
      <div className="shrink-0 bg-[#2b579a]">
        <TitleBar />
        <RibbonTabs />
      </div>
      <div className="shrink-0"><Ribbon /></div>
      <div className="flex min-h-0 flex-1">
        <NavPane />
        <Page />
        <Scrollbar />
      </div>
      <StatusBar />
    </div>
  );
}
